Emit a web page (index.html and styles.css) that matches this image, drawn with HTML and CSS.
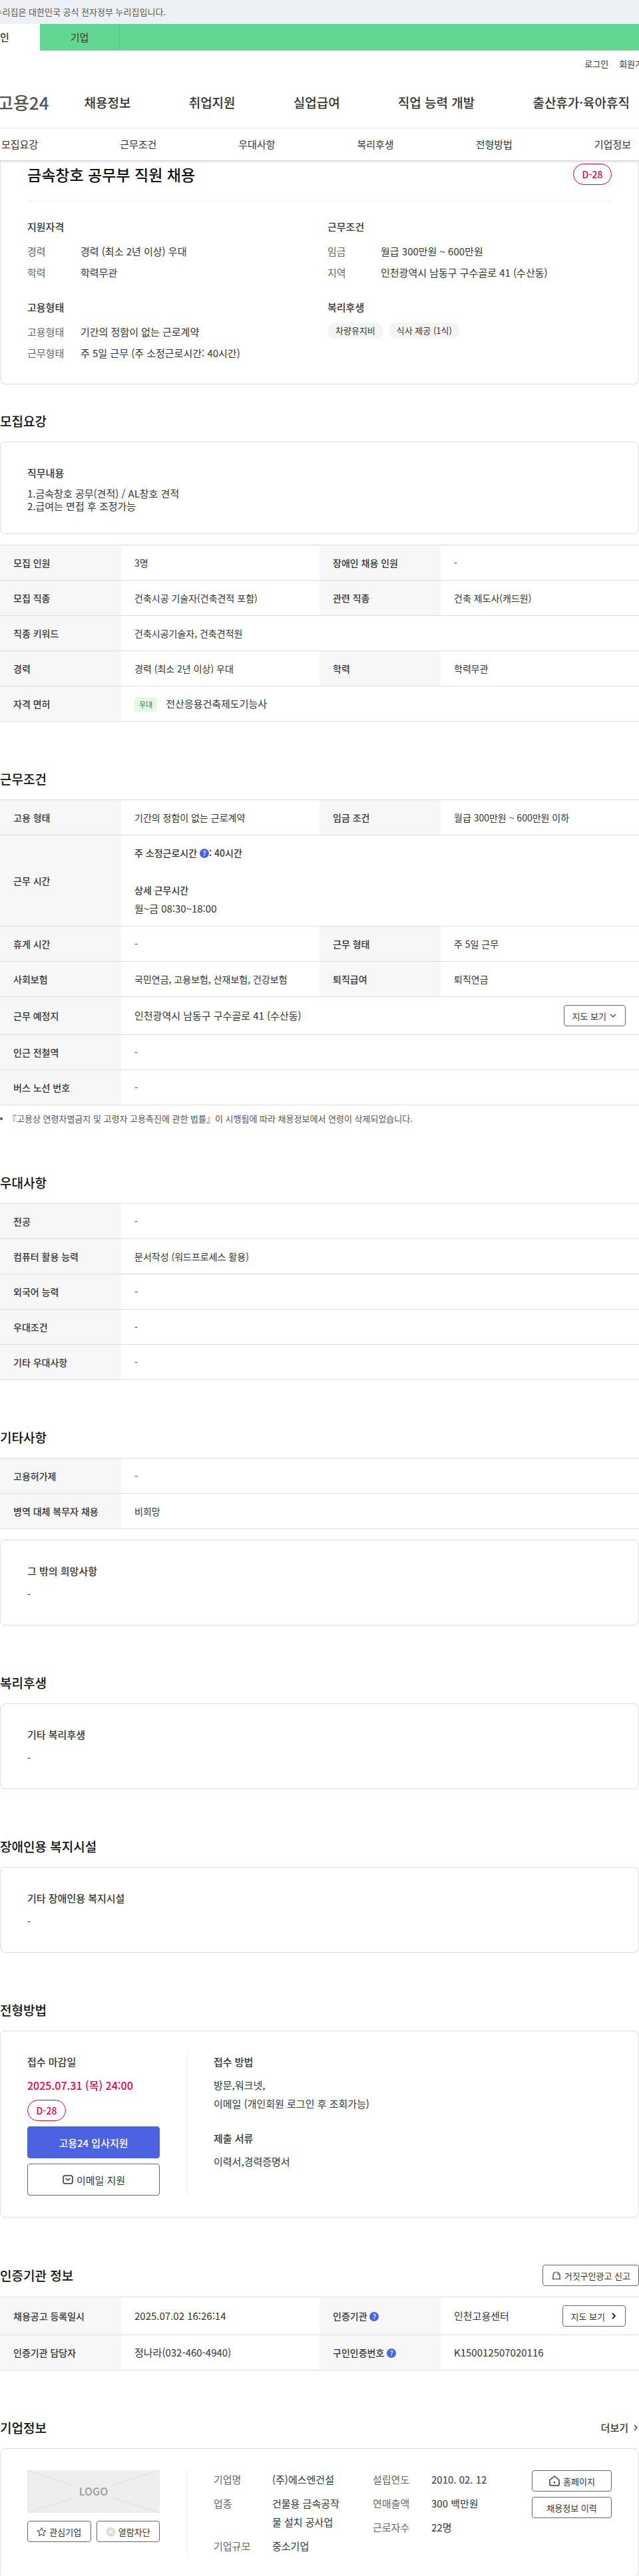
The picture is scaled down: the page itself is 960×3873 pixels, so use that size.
FILE: index.html
```html
<!DOCTYPE html>
<html lang="ko">
<head>
  <meta charset="utf-8">
  <meta name="viewport" content="width=device-width, initial-scale=1">
  <title>금속창호 공무부 직원 채용 - 고용24</title>
  <link rel="stylesheet" href="styles.css">
</head>
<body>
  <header class="header">
    <div class="gov"><p>이 누리집은 대한민국 공식 전자정부 누리집입니다.</p></div>
    <div class="tabs">
      <a href="#" class="tab on">개인</a>
      <a href="#" class="tab">기업</a>
    </div>
    <div class="util">
      <a href="#">로그인</a>
      <a href="#">회원가입</a>
    </div>
    <nav class="gnb">
      <a href="#" class="logo">고용24</a>
      <a href="#">채용정보</a>
      <a href="#">취업지원</a>
      <a href="#">실업급여</a>
      <a href="#">직업 능력 개발</a>
      <a href="#">출산휴가·육아휴직</a>
    </nav>
    <nav class="anchor">
      <a href="#recruit">모집요강</a>
      <a href="#work">근무조건</a>
      <a href="#prefer">우대사항</a>
      <a href="#welfare">복리후생</a>
      <a href="#method">전형방법</a>
      <a href="#company">기업정보</a>
    </nav>
  </header>

  <main>
    <div class="card summary">
      <div class="title-row">
        <h1>금속창호 공무부 직원 채용</h1>
        <span class="dday">D-28</span>
      </div>
      <div class="summary-grid">
        <div>
          <h3>지원자격</h3>
          <dl class="info">
            <dt>경력</dt><dd>경력 (최소 2년 이상) 우대</dd>
            <dt>학력</dt><dd>학력무관</dd>
          </dl>
        </div>
        <div>
          <h3>근무조건</h3>
          <dl class="info">
            <dt>임금</dt><dd>월급 300만원 ~ 600만원</dd>
            <dt>지역</dt><dd>인천광역시 남동구 구수골로 41 (수산동)</dd>
          </dl>
        </div>
        <div>
          <h3>고용형태</h3>
          <dl class="info">
            <dt>고용형태</dt><dd>기간의 정함이 없는 근로계약</dd>
            <dt>근무형태</dt><dd>주 5일 근무 (주 소정근로시간: 40시간)</dd>
          </dl>
        </div>
        <div>
          <h3>복리후생</h3>
          <div class="tags">
            <span>차량유지비</span>
            <span>식사 제공 (1식)</span>
          </div>
        </div>
      </div>
    </div>

    <section class="section first" id="recruit">
      <div class="head"><h2>모집요강</h2></div>
      <div class="card">
        <h3>직무내용</h3>
        <p class="dense">1.금속창호 공무(견적) / AL창호 견적<br>2.급여는 면접 후 조정가능</p>
      </div>
      <table class="table">
        <colgroup><col class="c-th"><col><col class="c-th"><col></colgroup>
        <tr><th>모집 인원</th><td>3명</td><th>장애인 채용 인원</th><td>-</td></tr>
        <tr><th>모집 직종</th><td>건축시공 기술자(건축견적 포함)</td><th>관련 직종</th><td>건축 제도사(캐드원)</td></tr>
        <tr><th>직종 키워드</th><td colspan="3">건축시공기술자, 건축견적원</td></tr>
        <tr><th>경력</th><td>경력 (최소 2년 이상) 우대</td><th>학력</th><td>학력무관</td></tr>
        <tr><th>자격 면허</th><td colspan="3" class="big"><span class="badge">우대</span>전산응용건축제도기능사</td></tr>
      </table>
    </section>

    <section class="section" id="work">
      <div class="head"><h2>근무조건</h2></div>
      <table class="table">
        <colgroup><col class="c-th"><col><col class="c-th"><col></colgroup>
        <tr><th>고용 형태</th><td>기간의 정함이 없는 근로계약</td><th>임금 조건</th><td>월급 300만원 ~ 600만원 이하</td></tr>
        <tr>
          <th>근무 시간</th>
          <td colspan="3" class="time">
            <p><strong>주 소정근로시간 <button type="button" class="help" aria-label="주 소정근로시간 도움말">?</button>: 40시간</strong></p>
            <p class="detail"><strong>상세 근무시간</strong></p>
            <p class="big">월~금 08:30~18:00</p>
          </td>
        </tr>
        <tr><th>휴게 시간</th><td>-</td><th>근무 형태</th><td>주 5일 근무</td></tr>
        <tr><th>사회보험</th><td>국민연금, 고용보험, 산재보험, 건강보험</td><th>퇴직급여</th><td>퇴직연금</td></tr>
        <tr>
          <th>근무 예정지</th>
          <td colspan="3" class="big tall">
            <div class="between">
              인천광역시 남동구 구수골로 41 (수산동)
              <button type="button" class="btn">지도 보기
                <svg width="12" height="12" viewBox="0 0 12 12"><path d="M2 4l4 4 4-4" fill="none" stroke="#333" stroke-width="1.2"/></svg>
              </button>
            </div>
          </td>
        </tr>
        <tr><th>인근 전철역</th><td colspan="3">-</td></tr>
        <tr><th>버스 노선 번호</th><td colspan="3">-</td></tr>
      </table>
      <ul class="note">
        <li>『고용상 연령차별금지 및 고령자 고용촉진에 관한 법률』이 시행됨에 따라 채용정보에서 연령이 삭제되었습니다.</li>
      </ul>
    </section>

    <section class="section" id="prefer">
      <div class="head"><h2>우대사항</h2></div>
      <table class="table">
        <colgroup><col class="c-th"><col></colgroup>
        <tr><th>전공</th><td>-</td></tr>
        <tr><th>컴퓨터 활용 능력</th><td>문서작성 (워드프로세스 활용)</td></tr>
        <tr><th>외국어 능력</th><td>-</td></tr>
        <tr><th>우대조건</th><td>-</td></tr>
        <tr><th>기타 우대사항</th><td>-</td></tr>
      </table>
    </section>

    <section class="section">
      <div class="head"><h2>기타사항</h2></div>
      <table class="table">
        <colgroup><col class="c-th"><col></colgroup>
        <tr><th>고용허가제</th><td>-</td></tr>
        <tr><th>병역 대체 복무자 채용</th><td>비희망</td></tr>
      </table>
      <div class="card after-table">
        <h3>그 밖의 희망사항</h3>
        <p>-</p>
      </div>
    </section>

    <section class="section" id="welfare">
      <div class="head"><h2>복리후생</h2></div>
      <div class="card">
        <h3>기타 복리후생</h3>
        <p>-</p>
      </div>
    </section>

    <section class="section">
      <div class="head"><h2>장애인용 복지시설</h2></div>
      <div class="card">
        <h3>기타 장애인용 복지시설</h3>
        <p>-</p>
      </div>
    </section>

    <section class="section" id="method">
      <div class="head"><h2>전형방법</h2></div>
      <div class="card split">
        <div class="side">
          <h3>접수 마감일</h3>
          <p class="deadline">2025.07.31 (목) 24:00</p>
          <span class="dday">D-28</span>
          <button type="button" class="btn large primary">고용24 입사지원</button>
          <button type="button" class="btn large">
            <svg width="18" height="18" viewBox="0 0 18 18"><rect x="2" y="3" width="14" height="12" rx="3" fill="none" stroke="#333" stroke-width="1.5"/><path d="M5.5 7.2L9 10l3.5-2.8" fill="none" stroke="#333" stroke-width="1.5"/></svg>
            이메일 지원
          </button>
        </div>
        <div class="body">
          <h3>접수 방법</h3>
          <p>방문,워크넷,<br>이메일 (개인회원 로그인 후 조회가능)</p>
          <h3 class="next">제출 서류</h3>
          <p>이력서,경력증명서</p>
        </div>
      </div>
    </section>

    <section class="section">
      <div class="head">
        <h2>인증기관 정보</h2>
        <button type="button" class="btn">
          <svg width="16" height="16" viewBox="0 0 16 16"><path d="M3 13V8a5 5 0 0 1 10 0v5M1.500 13.500h13M9 5.500q1.500.5 1.500 2" fill="none" stroke="#333" stroke-width="1.2"/></svg>
          거짓구인광고 신고
        </button>
      </div>
      <table class="table">
        <colgroup><col class="c-th"><col><col class="c-th"><col></colgroup>
        <tr>
          <th>채용공고 등록일시</th><td class="big">2025.07.02 16:26:14</td>
          <th>인증기관 <button type="button" class="help" aria-label="인증기관 도움말">?</button></th>
          <td class="big tall">
            <div class="between">
              인천고용센터
              <button type="button" class="btn map">지도 보기
                <svg width="10" height="10" viewBox="0 0 10 10"><path d="M3 1l4 4-4 4" fill="none" stroke="#222" stroke-width="1.8"/></svg>
              </button>
            </div>
          </td>
        </tr>
        <tr>
          <th>인증기관 담당자</th><td class="big">정나라(032-460-4940)</td>
          <th>구인인증번호 <button type="button" class="help" aria-label="구인인증번호 도움말">?</button></th>
          <td class="big">K150012507020116</td>
        </tr>
      </table>
    </section>

    <section class="section" id="company">
      <div class="head">
        <h2>기업정보</h2>
        <a href="#" class="more">더보기
          <svg width="10" height="12" viewBox="0 0 10 12"><path d="M3 2l4 4-4 4" fill="none" stroke="#333" stroke-width="1.3"/></svg>
        </a>
      </div>
      <div class="card split">
        <div class="side">
          <svg class="logo-box" viewBox="0 0 200 64" preserveAspectRatio="none" role="img" aria-label="LOGO">
            <rect width="200" height="64" fill="#eee"/>
            <path d="M0 0l72 23M200 0l-72 23M0 64l72-23M200 64l-72-23" stroke="#ddd" stroke-width="1"/>
            <text x="100" y="38" text-anchor="middle">LOGO</text>
          </svg>
          <div class="pair">
            <button type="button" class="btn">
              <svg width="15" height="15" viewBox="0 0 16 16"><path d="M8 1.500l2 4.300 4.700.6-3.500 3.200.9 4.700L8 12l-4.100 2.300.9-4.700L1.300 6.400 6 5.800z" fill="none" stroke="#555" stroke-width="1.2" stroke-linejoin="round"/></svg>
              관심기업
            </button>
            <button type="button" class="btn">
              <svg width="15" height="15" viewBox="0 0 16 16"><circle cx="8" cy="8" r="7.5" fill="#ddd"/><path d="M5 5l6 6M11 5l-6 6" stroke="#fff" stroke-width="1.5"/></svg>
              열람차단
            </button>
          </div>
        </div>
        <div class="body company">
          <dl class="info">
            <dt>기업명</dt><dd>(주)에스엔건설</dd>
            <dt>업종</dt><dd>건물용 금속공작물 설치 공사업</dd>
            <dt>기업규모</dt><dd>중소기업</dd>
          </dl>
          <dl class="info">
            <dt>설립연도</dt><dd>2010. 02. 12</dd>
            <dt>연매출액</dt><dd>300 백만원</dd>
            <dt>근로자수</dt><dd>22명</dd>
          </dl>
          <div class="links">
            <button type="button" class="btn">
              <svg width="18" height="18" viewBox="0 0 18 18"><path d="M2 7.500L9 2l7 5.500V14a2 2 0 0 1-2 2H4a2 2 0 0 1-2-2zM9 9.500V13" fill="none" stroke="#333" stroke-width="1.5" stroke-linejoin="round"/></svg>
              홈페이지
            </button>
            <button type="button" class="btn">채용정보 이력</button>
          </div>
        </div>
      </div>
    </section>
  </main>
</body>
</html>
```
FILE: styles.css
```css
* {
  box-sizing: border-box;
}
body {
  margin: 0;
  font-family: "Noto Sans CJK KR", sans-serif;
  font-size: 15px;
  line-height: 28px;
  color: #333;
  background: #fff;
  overflow-x: hidden;
}
h1, h2, h3, p, dl, dd, ul {
  margin: 0;
  padding: 0;
}
a {
  color: inherit;
  text-decoration: none;
}
button {
  font-family: inherit;
  color: #333;
  cursor: pointer;
}
h1 {
  font-size: 23px;
  font-weight: 500;
  line-height: 32px;
  color: #111;
}
h2 {
  font-size: 19px;
  font-weight: 500;
  line-height: 30px;
  color: #111;
}
h3 {
  font-size: 15px;
  font-weight: 500;
  line-height: 27px;
  margin-bottom: 8px;
}

/* header */
.header {
  position: relative;
  background: #fff;
  box-shadow: 0 1px 4px rgba(0, 0, 0, 0.25);
  overflow: clip;
  overflow-clip-margin: 6px;
}
.gov {
  height: 36px;
  background: #edf1f5;
  font-size: 13px;
  line-height: 36px;
  color: #555;
}
.gov p {
  margin-left: -24px;
}
.tabs {
  display: flex;
  height: 40px;
  background: #63d694;
}
.tab {
  width: 120px;
  font-size: 15px;
  line-height: 40px;
  text-align: center;
  border-right: 1px solid #58c586;
}
.tab.on {
  margin-left: -60px;
  background: #fff;
  border-right: 0;
  font-weight: 500;
}
.util {
  display: flex;
  justify-content: flex-end;
  gap: 16px;
  height: 40px;
  margin-right: -18px;
  font-size: 13px;
  line-height: 40px;
}
.gnb {
  display: flex;
  align-items: center;
  justify-content: space-between;
  height: 77px;
  margin-left: -4px;
  padding-right: 14px;
  border-bottom: 1px solid #e8e8e8;
  font-size: 19px;
  font-weight: 500;
  white-space: nowrap;
}
.gnb .logo {
  margin-right: -34px;
  font-size: 26px;
  color: #555;
}
.anchor {
  display: flex;
  justify-content: space-between;
  padding: 0 12px 0 2px;
  line-height: 48px;
}

/* card */
.card {
  padding: 32px 40px;
  border: 1px solid #ddd;
  border-radius: 8px;
}
.summary {
  padding-top: 5px;
  border-top: 0;
  border-radius: 0 0 8px 8px;
}
.summary h3 {
  margin-bottom: 10px;
}
.title-row {
  display: flex;
  justify-content: space-between;
  padding-bottom: 24px;
  border-bottom: 1px solid #eee;
}
.dday {
  display: inline-flex;
  align-items: center;
  justify-content: center;
  width: 58px;
  height: 32px;
  border: 1px solid #d9004f;
  border-radius: 16px;
  font-size: 14px;
  font-weight: 500;
  color: #d9004f;
}
.summary-grid {
  display: grid;
  grid-template-columns: 1fr 1fr;
  gap: 24px;
  padding-top: 24px;
}
.info {
  display: grid;
  grid-template-columns: 80px 1fr;
  row-gap: 4px;
}
.info dt {
  color: #666;
}
.tags {
  display: flex;
  gap: 8px;
}
.tags span {
  padding: 0 12px;
  border-radius: 12px;
  background: #f4f4f4;
  font-size: 13px;
  line-height: 24px;
}
.dense {
  line-height: 19px;
}

/* sections */
.section {
  margin-top: 71px;
}
.section.first {
  margin-top: 40px;
}
.head {
  display: flex;
  align-items: center;
  justify-content: space-between;
  margin-bottom: 16px;
}
.table {
  width: 100%;
  border-collapse: collapse;
  table-layout: fixed;
  font-size: 14px;
  line-height: 24px;
}
.card + .table, .after-table {
  margin-top: 16px;
}
.c-th {
  width: 182px;
}
.table th, .table td {
  height: 53px;
  padding: 0 20px;
  border-top: 1px solid #ddd;
  border-bottom: 1px solid #ddd;
  text-align: left;
}
.table th {
  background: #f7f7f7;
  font-weight: 500;
}
.table .big {
  font-size: 15px;
}
.table .tall {
  height: 57px;
}
.table .time {
  padding: 12px 20px;
  line-height: 28px;
}
.time strong {
  font-weight: 500;
}
.time .detail {
  margin-top: 28px;
}
.badge {
  display: inline-block;
  margin-right: 13px;
  padding: 0 7px;
  border-radius: 4px;
  background: #e6f7ec;
  font-size: 11px;
  line-height: 22px;
  color: #228738;
}
.between {
  display: flex;
  align-items: center;
  justify-content: space-between;
}
.help {
  width: 14px;
  height: 14px;
  padding: 0;
  border: 0;
  border-radius: 50%;
  background: #4b63e0;
  font-size: 10px;
  font-weight: 500;
  line-height: 14px;
  color: #fff;
  vertical-align: 1px;
}
.note {
  margin-top: 10px;
  list-style: none;
  font-size: 13px;
  line-height: 20px;
  color: #555;
}
.note li {
  display: flex;
  align-items: center;
  gap: 8px;
}
.note li::before {
  content: "";
  width: 4px;
  height: 4px;
  border-radius: 50%;
  background: #555;
}

/* buttons */
.btn {
  display: inline-flex;
  align-items: center;
  justify-content: center;
  gap: 4px;
  height: 32px;
  padding: 0 12px;
  border: 1px solid #666;
  border-radius: 4px;
  background: #fff;
  font-size: 13px;
  white-space: nowrap;
}
.btn.map {
  gap: 8px;
}
.btn.large {
  height: 48px;
  font-size: 15px;
}
.btn.primary {
  border-color: #4b63e0;
  background: #4b63e0;
  color: #fff;
  font-weight: 500;
}
.more {
  display: flex;
  align-items: center;
  gap: 6px;
  font-weight: 500;
}

/* two part card */
.split {
  display: grid;
  grid-template-columns: 240px 1fr;
}
.side {
  display: flex;
  flex-direction: column;
  gap: 8px;
  padding-right: 40px;
  border-right: 1px solid #eee;
}
.side h3 {
  margin: 0;
}
.body {
  padding-left: 40px;
}
.next {
  margin-top: 24px;
}
.deadline {
  font-size: 16px;
  font-weight: 500;
  color: #d9004f;
}
.logo-box {
  width: 100%;
  height: 64px;
  margin-bottom: 4px;
}
.logo-box text {
  font-size: 16px;
  font-weight: 500;
  fill: #999;
}
.pair {
  display: grid;
  grid-template-columns: 1fr 1fr;
  gap: 8px;
}
.pair .btn {
  padding: 0;
}
.company {
  display: grid;
  grid-template-columns: 1fr 1fr 120px;
  gap: 40px;
}
.company .info {
  grid-template-columns: 88px 1fr;
  align-content: start;
  row-gap: 8px;
}
.links {
  display: flex;
  flex-direction: column;
  gap: 8px;
}
```
